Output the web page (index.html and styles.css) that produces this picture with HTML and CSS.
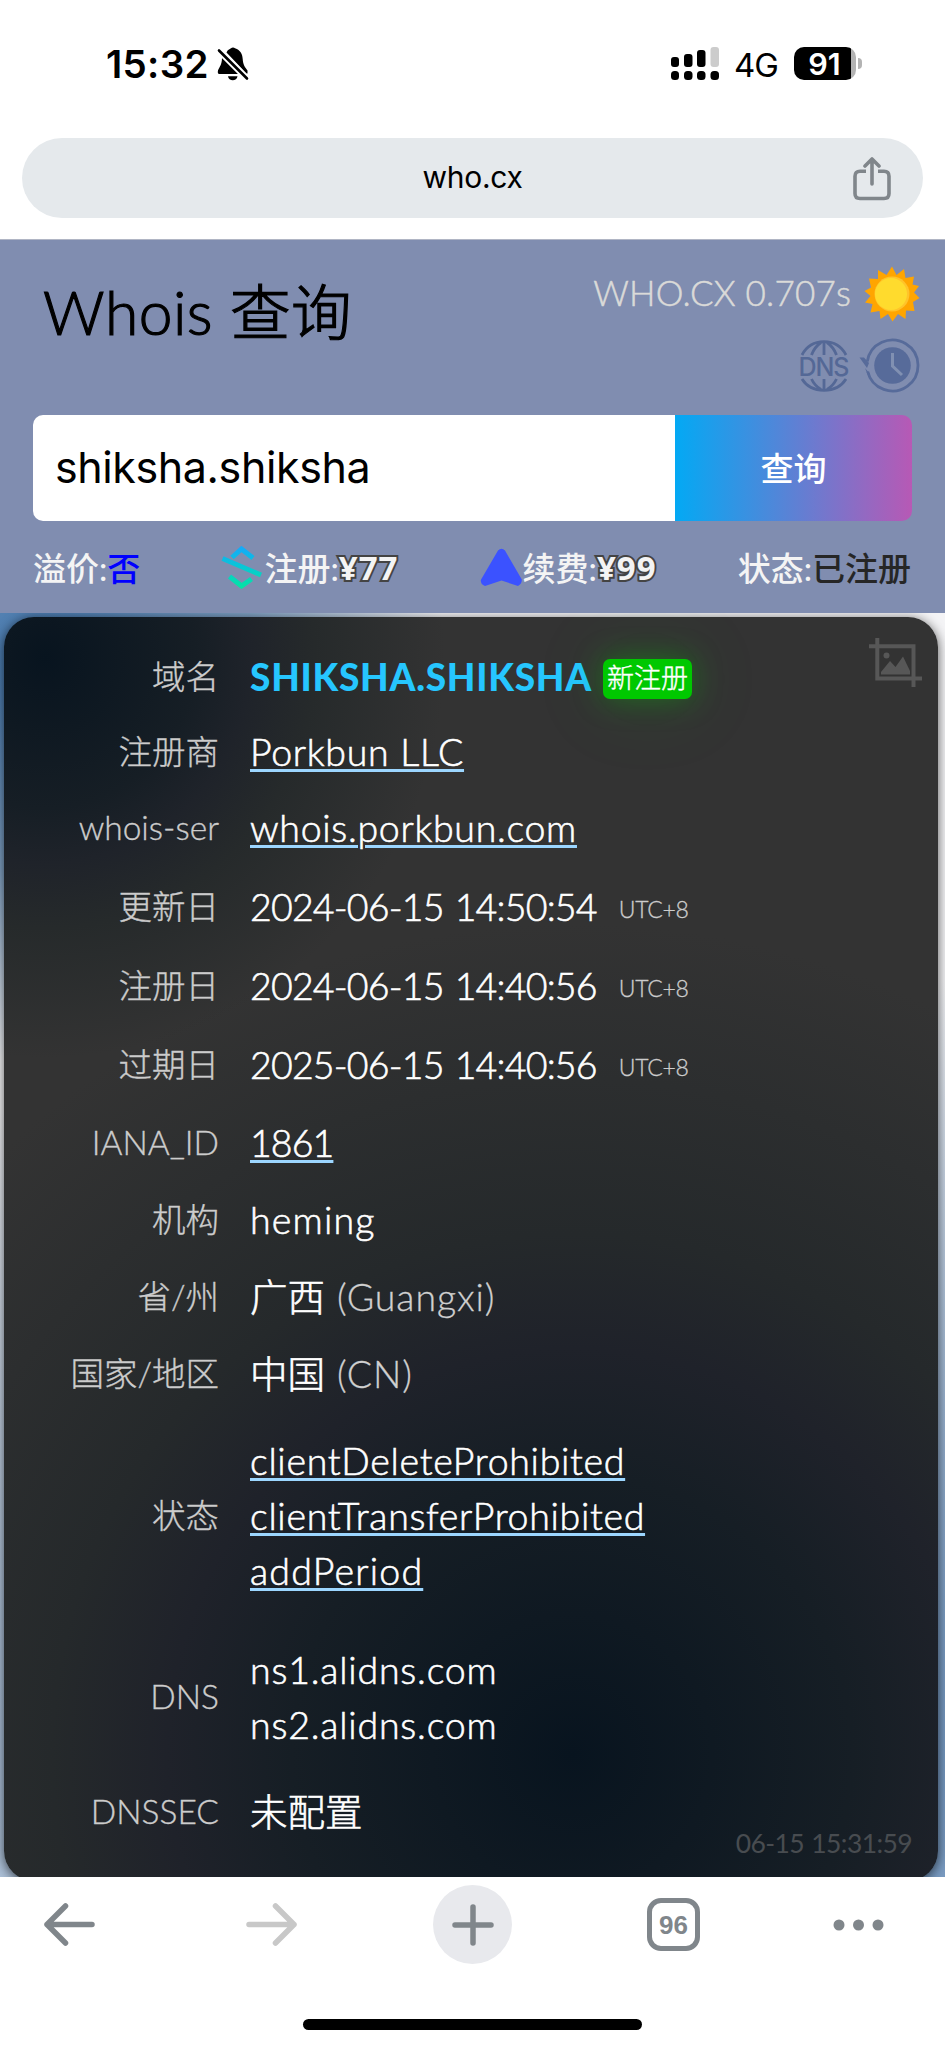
FILE: index.html
```html
<!DOCTYPE html>
<html lang="zh-CN">
<head>
<meta charset="utf-8">
<title>Whois 查询</title>
<link rel="stylesheet" href="styles.css">
</head>
<body>
<div class="status-bar">
  <span class="time">15:32</span>
  <svg class="bell" width="32" height="34" viewBox="0 0 32 34">
    <path d="M9.500 5.500 C10.500 2.800 12.500 2 14 1.200 C15 .3 17 .3 18 1.200 C23.500 3 25.500 7 25.700 12 C26 18 28 20 30.500 23.500 V26.500 H29.500 Z M5 11 C5 19 1 21 .8 25 C.8 26.500 1.500 27 2.500 27 H21 Z M11 29.300 H20.500 C20 34.500 11.500 34.500 11 29.300Z" fill="#000"/>
    <path d="M2 3.500 L30 31.500" stroke="#fff" stroke-width="6"/>
    <path d="M2 3.500 L30 31.500" stroke="#000" stroke-width="2.600" stroke-linecap="round"/>
  </svg>
  <svg class="signal" width="48" height="33" viewBox="0 0 48 33">
    <g fill="#000"><rect y="10" width="8" height="10" rx="3"/><rect x="13" y="7" width="8.500" height="13" rx="3"/><rect x="26" y="3" width="8.500" height="17" rx="3"/>
    <rect y="24" width="8" height="9" rx="3.500"/><rect x="13" y="24" width="8.500" height="9" rx="3.500"/><rect x="26" y="24" width="8.500" height="9" rx="3.500"/><rect x="39.500" y="24" width="8.500" height="9" rx="3.500"/></g>
    <rect x="39.500" width="8.500" height="20" rx="3" fill="#ccc"/>
  </svg>
  <span class="network">4G</span>
  <div class="battery">91</div><i class="nub"></i>
</div>
<div class="address">
  <div class="pill">
    <span class="url">who.cx</span>
    <svg class="share" width="38" height="44" viewBox="0 0 38 44" fill="none" stroke="#80868b" stroke-width="3.600">
      <path d="M13 14.300 H7 Q2 14.300 2 19.300 V36.500 Q2 41.500 7 41.500 H31 Q36 41.500 36 36.500 V19.300 Q36 14.300 31 14.300 H25"/>
      <path d="M19 27 V2.500 M12 9 L19 2 L26 9" stroke-linecap="round" stroke-linejoin="round"/>
    </svg>
  </div>
</div>
<header class="head">
  <div class="head-top">
    <h1>Whois 查询</h1>
    <div class="tools">
      <div class="timing"><span>WHO.CX 0.707s</span>
        <svg width="56" height="56" viewBox="0 0 56 56">
          <path fill="#ffa500" d="M28 .5 L32.500 9 L40 3 L41.500 12 L50 10.500 L48.500 18.500 L55 20 L50 26.500 L55.500 32 L49 36 L50.500 45 L42 44.500 L41.500 53 L34 48 L28.500 55.500 L24 48 L16.500 53 L15.500 45 L6.500 46.500 L8.500 38 L1 36.500 L6.500 30 L.5 25 L7 21.500 L5 12.500 L14 13 L14 4 L22.500 9Z"/>
          <circle cx="28" cy="28" r="17.500" fill="#ffc42a"/><circle cx="27" cy="28" r="16" fill="#ffdb2d"/>
        </svg>
      </div>
      <div class="shortcuts">
        <svg width="52" height="52" viewBox="0 0 52 52" fill="none" stroke="#546896" stroke-width="2.800">
          <path d="M4 15 Q11 1.700 26 1.700 Q41 1.700 48 15 M26 2 V15 M13.500 15 Q16.500 7 23 2.500 M38.500 15 Q35.500 7 29 2.500"/>
          <path d="M4 39 Q11 50.300 26 50.300 Q41 50.300 48 39 M26 50 V39 M13.500 39 Q16.500 45.500 23 49.500 M38.500 39 Q35.500 45.500 29 49.500"/>
          <text x="26" y="35.500" text-anchor="middle" textLength="51" class="dns-text">DNS</text>
        </svg>
        <svg width="61" height="55" viewBox="0 0 61 55" fill="none">
          <path d="M8.300 23.500 A25.500 25.500 0 1 1 8.700 33.500" stroke="#576b9a" stroke-width="2.800"/>
          <path d="M.5 19.500 H5 L10 25 L8 30Z M6 30 L11 36 L9.500 39Z" fill="#576b9a"/>
          <circle cx="33.500" cy="27.500" r="18.300" fill="#576b9a"/>
          <path d="M33.500 15 V28 L43 37" stroke="#8090b2" stroke-width="3"/>
        </svg>
      </div>
    </div>
  </div>
  <div class="search"><div class="query">shiksha.shiksha</div><div class="submit">查询</div></div>
  <div class="facts">
    <div class="fact">溢价:<b class="no">否</b></div>
    <div class="fact"><svg width="43" height="43" viewBox="0 0 43 43" fill="none" stroke="url(#g)" stroke-width="5">
      <defs><linearGradient id="g" gradientUnits="userSpaceOnUse" x1="0" y1="0" x2="0" y2="43"><stop stop-color="#16a8fb"/><stop offset=".5" stop-color="#08c8d4"/><stop offset="1" stop-color="#05e6a0"/></linearGradient></defs>
      <path d="M11 11.500 L20.500 3 L32 12 M1.500 12.500 L40 29 M8.500 30.500 L20.500 40 L30.500 33"/></svg>注册:<b class="price">¥77</b></div>
    <div class="fact"><svg width="43" height="39" viewBox="0 0 43 39"><path d="M18 2.500 Q21.500 -1 25 2.500 L41.800 31.500 Q42 35.500 38 38 L21.500 32.500 L5 38 Q.5 36.500 .8 32Z" fill="#3b52ff"/></svg>续费:<b class="price">¥99</b></div>
    <div class="fact">状态:<b class="taken">已注册</b></div>
  </div>
</header>
<main class="stage">
  <div class="card">
    <svg class="shot" width="53" height="49" viewBox="0 0 53 49" fill="none" stroke="#575757" stroke-width="4">
      <path d="M8.300 0 V40.500 H53 M0 8.300 H44.500 V49"/><circle cx="17.500" cy="17.500" r="3" fill="#575757" stroke="none"/>
      <path d="M12 36.500 V34 L21 23 L26.500 29 L34 18.500 L41 33 V36.500Z" fill="#575757" stroke="none"/></svg>
    <dl class="record">
      <dt>域名</dt><dd class="name"><b>SHIKSHA.SHIKSHA</b><span class="badge">新注册</span></dd>
      <dt>注册商</dt><dd><a>Porkbun LLC</a></dd>
      <dt>whois-ser</dt><dd><a>whois.porkbun.com</a></dd>
      <dt>更新日</dt><dd class="date">2024-06-15 14:50:54<small>UTC+8</small></dd>
      <dt>注册日</dt><dd class="date">2024-06-15 14:40:56<small>UTC+8</small></dd>
      <dt>过期日</dt><dd class="date">2025-06-15 14:40:56<small>UTC+8</small></dd>
      <dt>IANA_ID</dt><dd><a class="number">1861</a></dd>
      <dt>机构</dt><dd class="org">heming</dd>
      <dt>省/州</dt><dd class="place">广西<span class="en">(Guangxi)</span></dd>
      <dt>国家/地区</dt><dd class="place">中国<span class="en">(CN)</span></dd>
      <dt>状态</dt><dd class="lines"><a>clientDeleteProhibited</a><a>clientTransferProhibited</a><a class="org">addPeriod</a></dd>
      <dt>DNS</dt><dd class="lines servers"><span>ns1.alidns.com</span><span>ns2.alidns.com</span></dd>
      <dt>DNSSEC</dt><dd class="place">未配置</dd>
    </dl>
    <time class="stamp">06-15 15:31:59</time>
  </div>
</main>
<nav class="toolbar">
  <svg width="51" height="43" viewBox="0 0 51 43" class="stroke"><path d="M48 21.500 H3 M21.500 3 L3 21.500 L21.500 40"/></svg>
  <svg width="51" height="43" viewBox="0 0 51 43" class="stroke off"><path d="M3 21.500 H48 M29.500 3 L48 21.500 L29.500 40"/></svg>
  <div class="plus"><svg width="42" height="42" viewBox="0 0 42 42" class="stroke"><path d="M21 3 V39 M3 21 H39"/></svg></div>
  <div class="tabs">96</div>
  <svg width="51" height="12" viewBox="0 0 51 12" fill="#80868b"><circle cx="6" cy="6" r="5.500"/><circle cx="25.500" cy="6" r="5.500"/><circle cx="45" cy="6" r="5.500"/></svg>
</nav>
<div class="home"><i></i></div>
</body>
</html>
```
FILE: styles.css
```css
* { box-sizing: border-box; }
body { margin: 0; width: 945px; height: 2048px; overflow: hidden; background: #fff; font-family: Lato, "Noto Sans CJK SC", sans-serif; color: #000; }
svg { display: block; flex: none; }
h1, dl, dd { margin: 0; }
.status-bar { height: 138px; padding: 47px 0 0 106px; display: flex; align-items: flex-start; font-family: Inter, sans-serif; }
.time { width: 111px; font-size: 38.500px; font-weight: 600; line-height: 35px; letter-spacing: .3px; }
.signal { margin-left: 422px; }
.network { width: 60px; margin-left: 15px; font-size: 33px; line-height: 37px; letter-spacing: -1px; }
.battery { width: 62px; height: 33px; border-radius: 10px; background: linear-gradient(90deg, #000 57px, #b3b3b3 57px); color: #fff; font-weight: 600; font-size: 30.500px; line-height: 33px; text-align: center; padding-right: 1px; }
.nub { width: 4px; height: 11px; margin: 11px 0 0 2px; background: #b3b3b3; border-radius: 0 5px 5px 0; }
.address { height: 101px; padding: 0 22px; }
.pill { height: 80px; border-radius: 40px; background: #e5e9ec; display: grid; grid-template-columns: 1fr auto 1fr; align-items: center; padding: 0 32px; font-family: Inter, sans-serif; }
.url { grid-column: 2; font-size: 30px; margin-top: -3px; letter-spacing: -.3px; }
.share { justify-self: end; margin-top: 2px; }
.head { height: 374px; background: #808db0; border-top: 1px solid #b0b5c4; padding: 26px 25px 0 33px; }
.head-top { display: flex; justify-content: space-between; height: 149px; }
h1 { padding: 8px 0 0 10px; font-size: 60.500px; line-height: 76px; font-weight: 300; letter-spacing: .5px; -webkit-text-stroke: 1.200px; }
.timing { display: flex; justify-content: flex-end; align-items: center; gap: 13px; color: #dadad8; font-size: 35px; font-weight: 300; letter-spacing: .2px; -webkit-text-stroke: .5px; }
.timing span { margin-top: -4px; }
.shortcuts { display: flex; justify-content: flex-end; gap: 9px; margin-top: 16px; align-items: center; }
.dns-text { font: 500 25px Inter, sans-serif; fill: #546896; stroke: none; }
.search { display: flex; width: 879px; height: 106px; }
.query { width: 642px; padding-left: 22px; border-radius: 10px 0 0 10px; background: #fff; font: 43px/105px Inter, sans-serif; letter-spacing: -.4px; }
.submit { flex: 1; border-radius: 0 10px 10px 0; background: linear-gradient(90deg, #03a9f4, #b759b5); color: #fff; font-size: 33px; line-height: 106px; font-weight: 500; text-align: center; }
.facts { display: flex; justify-content: space-between; width: 878px; height: 92px; align-items: center; color: #f4f4f4; font-size: 33px; font-weight: 500; }
.fact { display: flex; align-items: center; }
.fact b { font-weight: 500; }
.fact .no { color: #00f; }
.fact .taken { color: #262626; }
.fact .price { font: 700 33px "Noto Sans", sans-serif; letter-spacing: 1px; -webkit-text-stroke: 4px #444; paint-order: stroke fill; }
.stage { height: 1264px; padding: 4px 7px 0 4px; overflow: hidden; background: radial-gradient(circle at 45px 50px, #3e72aa 0, #7fa0c2 210px, rgba(245,245,248,0) 400px), radial-gradient(circle at 572px 1143px, #4478b0 0, #6f93bc 350px, #f4f4f6 860px); }
.card { position: relative; height: 1264px; border-radius: 30px; padding-top: 22px; color: #fff; box-shadow: 0 2px 12px rgba(0,0,0,.65); background: radial-gradient(circle at 41px 41px, #08141f 0, #161e25 150px, #1f232a 205px, #262a2b 270px, rgba(51,51,51,0) 400px), radial-gradient(circle at 568px 1137px, #08141f 0, #161e25 280px, #1f222a 405px, #25292b 520px, #333 830px); }
.shot { position: absolute; right: 16px; top: 21px; }
.record { display: grid; grid-template-columns: 215px 1fr; column-gap: 31px; grid-template-rows: 74px 76px 77px 80px 79px 79px 77px 77px 77px 77px 206px 157px 72px; align-items: center; font-size: 37.500px; line-height: 55px; -webkit-text-stroke: .6px; }
dt { text-align: right; color: #ccc; font-size: 33.500px; font-weight: 300; -webkit-text-stroke: .35px; }
dd { display: flex; align-items: center; font-weight: 300; letter-spacing: .7px; }
.record a { width: max-content; text-decoration: underline 3px #9cd6ff; text-underline-offset: 3px; }
.name b { color: #26c6ff; font-weight: 900; font-size: 37px; letter-spacing: .75px; -webkit-text-stroke: 0; }
.badge { margin: 5px 0 0 11px; height: 40px; padding: 0 4px; border-radius: 7px; background: #00c800; font-size: 27px; line-height: 38px; letter-spacing: 0; -webkit-text-stroke: .4px; box-shadow: 0 0 30px rgba(0,200,0,.35), 0 0 80px rgba(0,200,0,.15); }
.date { letter-spacing: -.8px; word-spacing: 1.500px; }
.date small { margin: 6px 0 0 22px; font-size: 23px; color: #ccc; letter-spacing: -.3px; -webkit-text-stroke: .3px; }
.record .number { letter-spacing: -.9px; }
.record .org { letter-spacing: 1.200px; }
.servers { letter-spacing: .8px; }
.place { letter-spacing: 0; }
.en { color: #d0d0d0; margin-left: 12px; letter-spacing: .9px; -webkit-text-stroke: .3px; }
.lines { flex-direction: column; align-items: flex-start; }
.stamp { position: absolute; right: 26px; bottom: 22px; font-size: 26.500px; line-height: 32px; letter-spacing: -.6px; word-spacing: 1px; color: #484c50; }
.toolbar { height: 95px; padding: 0 0 0 44px; display: flex; align-items: center; }
.toolbar > :nth-child(2) { margin-left: 151px; }
.toolbar > :nth-child(3) { margin-left: 136px; }
.toolbar > :nth-child(4) { margin-left: 135px; }
.toolbar > :nth-child(5) { margin-left: 133px; }
.stroke { fill: none; stroke: #80868b; stroke-width: 5.500; stroke-linecap: round; stroke-linejoin: round; }
.off { stroke: #c8c8c8; }
.plus { width: 79px; height: 79px; border-radius: 50%; background: #e8e9ed; display: grid; place-items: center; }
.tabs { width: 53px; height: 53px; border: 5px solid #80868b; border-radius: 14px; color: #80868b; font: 700 26px/44px "Liberation Sans", sans-serif; text-align: center; }
.home { height: 76px; padding: 47px 0 0 303px; }
.home i { display: block; width: 339px; height: 11px; border-radius: 6px; background: #000; }
```
